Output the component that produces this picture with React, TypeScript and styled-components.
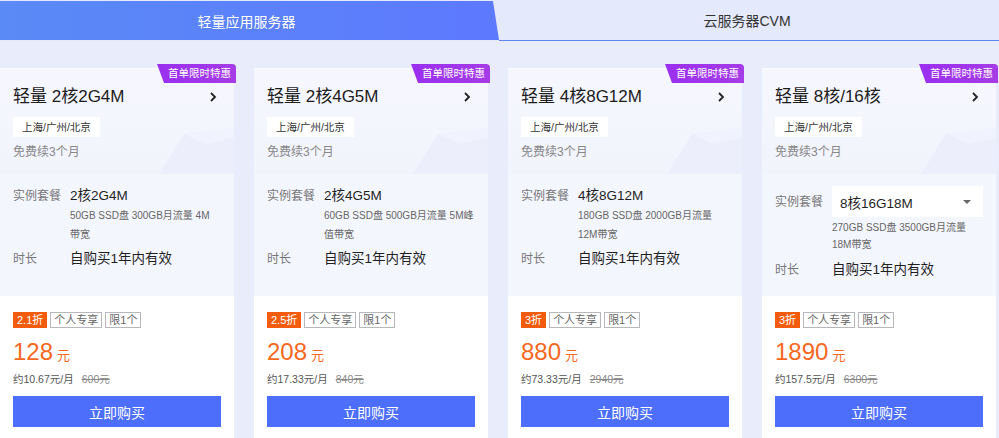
import React from "react";
import styled, { createGlobalStyle } from "styled-components";

type Plan = {
  title: string;
  spec: string;
  detail: string[];
  discount: string;
  price: string;
  monthly: string;
  original: string;
  select?: boolean;
};

const plans: Plan[] = [
  {
    title: "轻量 2核2G4M",
    spec: "2核2G4M",
    detail: ["50GB SSD盘 300GB月流量 4M", "带宽"],
    discount: "2.1折",
    price: "128",
    monthly: "约10.67元/月",
    original: "600元",
  },
  {
    title: "轻量 2核4G5M",
    spec: "2核4G5M",
    detail: ["60GB SSD盘 500GB月流量 5M峰", "值带宽"],
    discount: "2.5折",
    price: "208",
    monthly: "约17.33元/月",
    original: "840元",
  },
  {
    title: "轻量 4核8G12M",
    spec: "4核8G12M",
    detail: ["180GB SSD盘 2000GB月流量", "12M带宽"],
    discount: "3折",
    price: "880",
    monthly: "约73.33元/月",
    original: "2940元",
  },
  {
    title: "轻量 8核/16核",
    spec: "8核16G18M",
    detail: ["270GB SSD盘 3500GB月流量", "18M带宽"],
    discount: "3折",
    price: "1890",
    monthly: "约157.5元/月",
    original: "6300元",
    select: true,
  },
];

const App = () => {
  return (
    <>
      <GlobalStyle />
      <Page>
        <TabBar>
          <ActiveTab>轻量应用服务器</ActiveTab>
          <Tab>云服务器CVM</Tab>
        </TabBar>
        <CardRow>
          {plans.map((p) => (
            <Card key={p.title}>
              <Badge>首单限时特惠</Badge>
              <Top>
                <Deco viewBox="0 0 100 50" preserveAspectRatio="none">
                  <polygon points="25,50 50,10 100,4 100,50" fill="#eceefc" />
                  <polygon points="50,10 72,20 100,14 100,4" fill="#f0f2fd" />
                </Deco>
                <TitleRow>
                  <span>{p.title}</span>
                  <svg width="8" height="12" viewBox="0 0 8 12">
                    <polyline
                      points="2,2 6,6 2,10"
                      fill="none"
                      stroke="#222"
                      strokeWidth="1.8"
                    />
                  </svg>
                </TitleRow>
                <Region>上海/广州/北京</Region>
                <Renew>免费续3个月</Renew>
              </Top>
              <Middle>
                <SpecRow>
                  <Label>实例套餐</Label>
                  {p.select ? (
                    <Dropdown>
                      <span>{p.spec}</span>
                      <Caret />
                    </Dropdown>
                  ) : (
                    <Value>{p.spec}</Value>
                  )}
                </SpecRow>
                <Detail $tall={p.select}>
                  {p.detail.map((d) => (
                    <div key={d}>{d}</div>
                  ))}
                </Detail>
                <SpecRow $gap={p.select ? 7 : 5}>
                  <Label>时长</Label>
                  <Value>自购买1年内有效</Value>
                </SpecRow>
              </Middle>
              <Bottom>
                <Tags>
                  <Tag $hot>{p.discount}</Tag>
                  <Tag>个人专享</Tag>
                  <Tag>限1个</Tag>
                </Tags>
                <Price>
                  {p.price}
                  <Unit>元</Unit>
                </Price>
                <Monthly>
                  {p.monthly}
                  <Original>{p.original}</Original>
                </Monthly>
                <BuyButton>立即购买</BuyButton>
              </Bottom>
            </Card>
          ))}
        </CardRow>
      </Page>
    </>
  );
};

const GlobalStyle = createGlobalStyle`
  body {
    margin: 0;
    background: #e8ecfb;
    font-family: "Liberation Sans", "Noto Sans CJK SC", sans-serif;
  }
`;

const Page = styled.div`
  width: 999px;
  height: 438px;
  overflow: hidden;
  background: #e8ecfb;
`;

const TabBar = styled.div`
  display: flex;
  height: 41px;
  background: #e4e9fb;
`;

const ActiveTab = styled.div`
  width: 499px;
  height: 39px;
  margin-top: 1px;
  padding-right: 6px;
  box-sizing: border-box;
  background: linear-gradient(90deg, #5a8af6, #5d79fe);
  clip-path: polygon(0 0, 493px 0, 100% 100%, 0 100%);
  display: flex;
  align-items: center;
  justify-content: center;
  color: #fff;
  font-size: 14px;
`;

const Tab = styled.div`
  flex: 1;
  height: 40px;
  border-bottom: 1px solid #6383ee;
  display: flex;
  align-items: center;
  justify-content: center;
  color: #333;
  font-size: 14px;
  padding-right: 4px;
`;

const CardRow = styled.div`
  display: flex;
  gap: 20px;
  padding-top: 27px;
`;

const Card = styled.div`
  position: relative;
  width: 234px;
  flex-shrink: 0;
  display: flex;
  flex-direction: column;
  border-bottom: 1px solid #dde2f2;
`;

const Badge = styled.div`
  position: absolute;
  top: -4px;
  right: -2px;
  z-index: 2;
  height: 19px;
  padding: 0 5px 0 11px;
  background: linear-gradient(90deg, #9a2ff0, #a53ce6);
  clip-path: polygon(0 0, 100% 0, 100% 100%, 7px 100%);
  border-top-right-radius: 4px;
  color: #fff;
  font-size: 10.5px;
  line-height: 19px;
  white-space: nowrap;
`;

const Top = styled.div`
  position: relative;
  height: 106px;
  box-sizing: border-box;
  padding: 17px 17px 0 13px;
  background: linear-gradient(180deg, #f6f7fe, #f2f4fd);
  border-top: 1px solid #fbfcff;
  overflow: hidden;
`;

const Deco = styled.svg`
  position: absolute;
  right: 0;
  bottom: 0;
  width: 100px;
  height: 50px;
`;

const TitleRow = styled.div`
  position: relative;
  display: flex;
  align-items: center;
  justify-content: space-between;
  font-size: 17px;
  line-height: 22px;
  color: #1c1c1c;
`;

const Region = styled.div`
  position: relative;
  display: inline-block;
  margin-top: 9px;
  height: 20px;
  padding: 0 9px;
  background: #fff;
  font-size: 10.5px;
  line-height: 20px;
  color: #333;
`;

const Renew = styled.div`
  position: relative;
  margin-top: 5px;
  font-size: 12px;
  line-height: 20px;
  color: #888;
`;

const Middle = styled.div`
  height: 122px;
  box-sizing: border-box;
  padding: 12px 13px 0;
  background: #f4f6fe;
`;

const SpecRow = styled.div<{ $gap?: number }>`
  display: grid;
  grid-template-columns: 57px 1fr;
  align-items: center;
  margin-top: ${(p) => p.$gap ?? 0}px;
  min-height: 20px;
`;

const Label = styled.div`
  font-size: 12px;
  line-height: 20px;
  color: #777;
`;

const Value = styled.div`
  font-size: 13.5px;
  line-height: 20px;
  color: #1f1f1f;
`;

const Dropdown = styled.div`
  display: flex;
  align-items: center;
  justify-content: space-between;
  height: 31px;
  padding: 0 12px 0 8px;
  background: #fff;
  font-size: 13.5px;
  color: #1f1f1f;
`;

const Caret = styled.span`
  width: 0;
  height: 0;
  border-left: 4px solid transparent;
  border-right: 4px solid transparent;
  border-top: 4px solid #666;
`;

const Detail = styled.div<{ $tall?: boolean }>`
  margin-left: 57px;
  margin-top: ${(p) => (p.$tall ? "2px" : "1px")};
  font-size: 10px;
  line-height: ${(p) => (p.$tall ? "17px" : "18.5px")};
  color: #666;
  white-space: nowrap;
`;

const Bottom = styled.div`
  background: #fff;
  padding: 16px 13px 12px;
`;

const Tags = styled.div`
  display: flex;
  gap: 3px;
`;

const Tag = styled.span<{ $hot?: boolean }>`
  height: 16px;
  box-sizing: border-box;
  padding: 0 3px;
  font-size: 11px;
  line-height: 14px;
  border: 1px solid ${(p) => (p.$hot ? "#f25c0c" : "#b8b8bc")};
  background: ${(p) => (p.$hot ? "#f25c0c" : "#fff")};
  color: ${(p) => (p.$hot ? "#fff" : "#666")};
`;

const Price = styled.div`
  margin-top: 10px;
  font-size: 24px;
  line-height: 28px;
  color: #f7671d;
`;

const Unit = styled.span`
  margin-left: 4px;
  font-size: 13px;
`;

const Monthly = styled.div`
  font-size: 10.5px;
  line-height: 18px;
  color: #555;
`;

const Original = styled.span`
  margin-left: 8px;
  color: #888;
  text-decoration: line-through;
`;

const BuyButton = styled.button`
  display: block;
  width: 100%;
  height: 31px;
  margin-top: 8px;
  border: none;
  background: #4d6efb;
  color: #fff;
  font-family: inherit;
  font-size: 14px;
  cursor: pointer;
`;

export default App;
